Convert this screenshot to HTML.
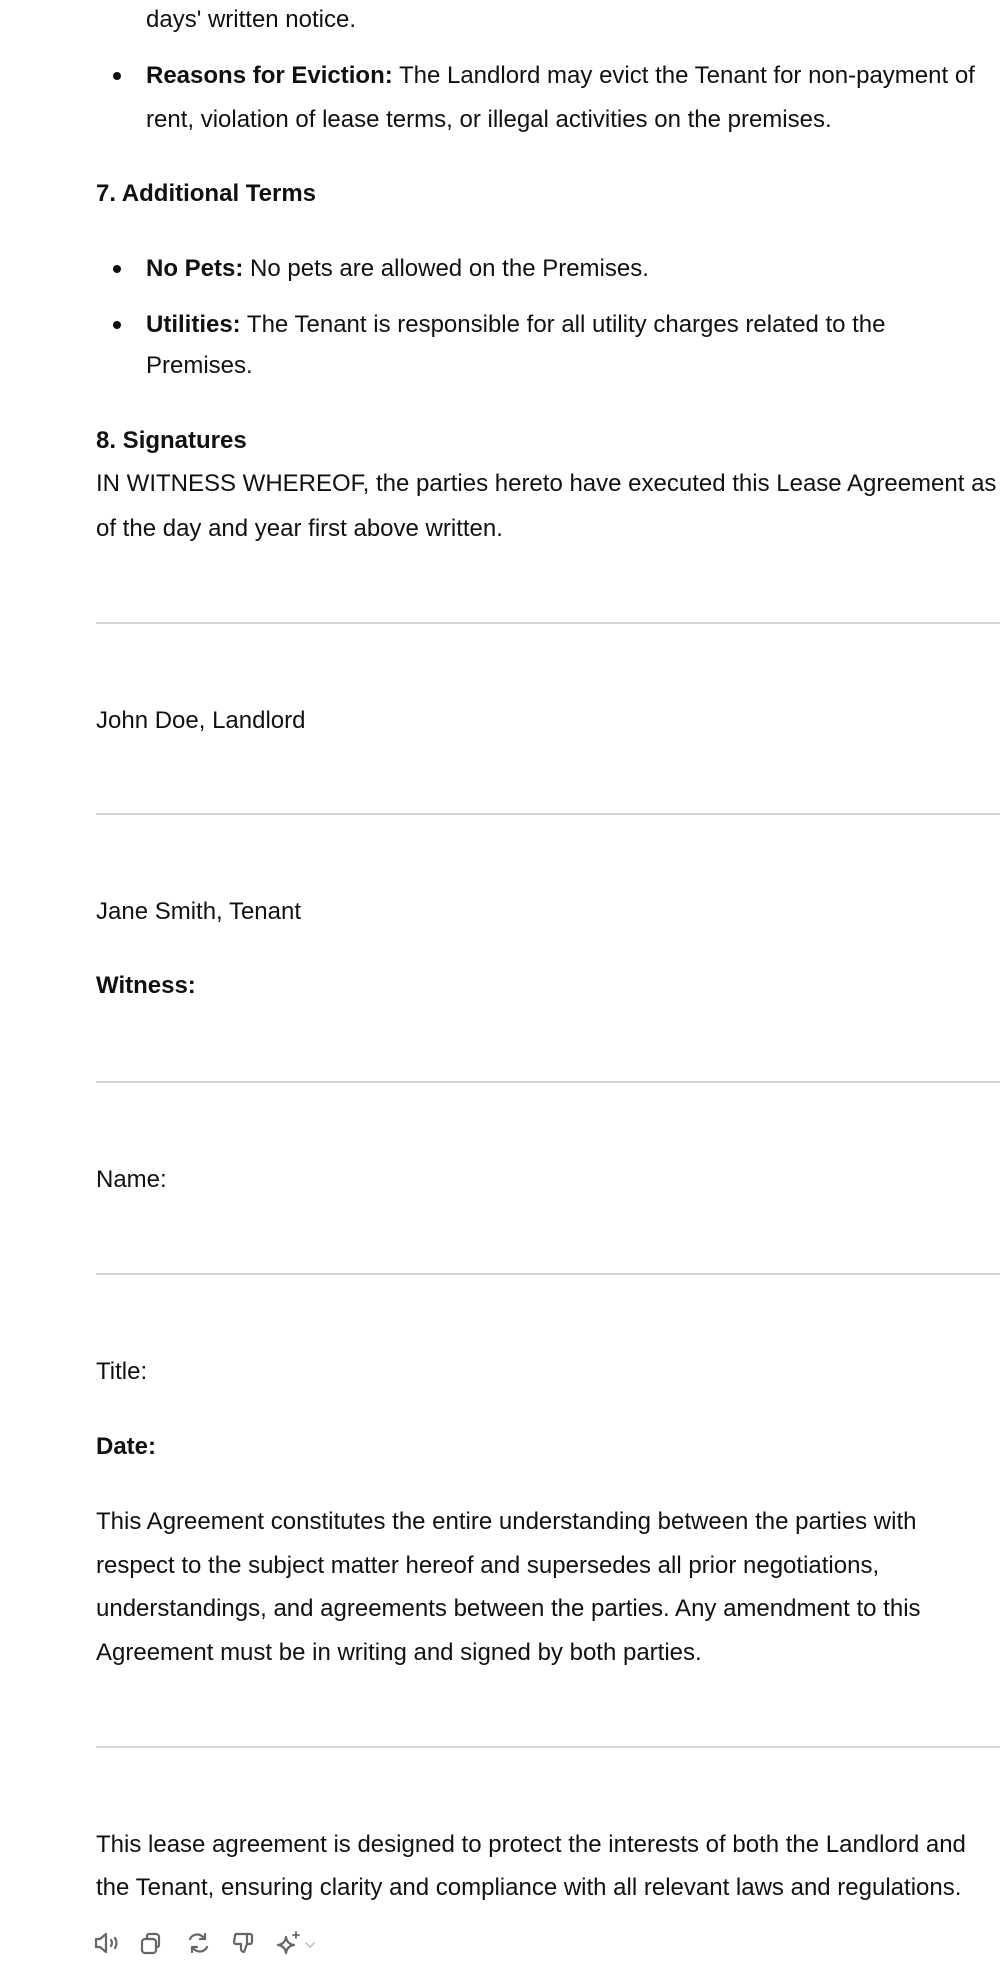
<!DOCTYPE html>
<html><head><meta charset="utf-8"><style>
html,body{margin:0;padding:0;background:#fff;}
body{width:1000px;height:1988px;position:relative;overflow:hidden;font-family:"Liberation Sans",sans-serif;font-size:24px;color:#111;letter-spacing:0;}
.l{position:absolute;left:96px;white-space:nowrap;line-height:28px;height:28px;}
.b{left:146px;}
.dot{position:absolute;left:113px;width:8px;height:8px;border-radius:50%;background:#111;}
strong{font-weight:bold;}
.hr{position:absolute;left:96px;width:904px;height:0;border-top:2px solid #d6d6d6;}
svg{position:absolute;}
</style></head><body>
<div class="l b" style="top:6px">days' written notice.</div>
<div class="dot" style="top:72px"></div>
<div class="l b" style="top:62px"><strong>Reasons for Eviction:</strong> The Landlord may evict the Tenant for non-payment of</div>
<div class="l b" style="top:106px">rent, violation of lease terms, or illegal activities on the premises.</div>
<div class="l" style="top:180px"><strong>7. Additional Terms</strong></div>
<div class="dot" style="top:265px"></div>
<div class="l b" style="top:255px"><strong>No Pets:</strong> No pets are allowed on the Premises.</div>
<div class="dot" style="top:321px"></div>
<div class="l b" style="top:311px"><strong>Utilities:</strong> The Tenant is responsible for all utility charges related to the</div>
<div class="l b" style="top:352px">Premises.</div>
<div class="l" style="top:427px"><strong>8. Signatures</strong></div>
<div class="l" style="top:470px">IN WITNESS WHEREOF, the parties hereto have executed this Lease Agreement as</div>
<div class="l" style="top:515px">of the day and year first above written.</div>
<div class="hr" style="top:622px"></div>
<div class="l" style="top:707px">John Doe, Landlord</div>
<div class="hr" style="top:813px"></div>
<div class="l" style="top:898px">Jane Smith, Tenant</div>
<div class="l" style="top:972px"><strong>Witness:</strong></div>
<div class="hr" style="top:1081px"></div>
<div class="l" style="top:1166px">Name:</div>
<div class="hr" style="top:1273px"></div>
<div class="l" style="top:1358px">Title:</div>
<div class="l" style="top:1433px"><strong>Date:</strong></div>
<div class="l" style="top:1508px">This Agreement constitutes the entire understanding between the parties with</div>
<div class="l" style="top:1552px">respect to the subject matter hereof and supersedes all prior negotiations,</div>
<div class="l" style="top:1595px">understandings, and agreements between the parties. Any amendment to this</div>
<div class="l" style="top:1639px">Agreement must be in writing and signed by both parties.</div>
<div class="hr" style="top:1746px"></div>
<div class="l" style="top:1831px">This lease agreement is designed to protect the interests of both the Landlord and</div>
<div class="l" style="top:1874px">the Tenant, ensuring clarity and compliance with all relevant laws and regulations.</div>
<svg style="left:94px;top:1930px" width="240" height="26" viewBox="0 0 240 26" fill="none" stroke="#666" stroke-width="2.2" stroke-linecap="round" stroke-linejoin="round">
<path d="M2 9h4l6-5v18l-6-5H2z"/>
<path d="M17 10q2 3 0 6"/><path d="M21 8q3 5 0 10"/>
<rect x="48" y="9" width="14" height="14" rx="3"/><path d="M53 9V6a2 2 0 0 1 2-2h7a3 3 0 0 1 3 3v8a2 2 0 0 1-2 2h-1"/>
<path d="M96 9a8 8 0 0 1 13-2l2 2M111 4v5h-5"/><path d="M113 17a8 8 0 0 1-13 2l-2-2M98 22v-5h5"/>
<path d="M142 4h14a2 2 0 0 1 2 2v6a2 2 0 0 1-2 2h-3l-3 8a3 3 0 0 1-3-3v-5h-5a2 2 0 0 1-2-2l1-6a2 2 0 0 1 1-2z"/><path d="M153 4v10"/>
<path d="M192 7q1 7 8 8q-7 1-8 8q-1-7-8-8q7-1 8-8z"/><path d="M202 2v6M199 5h6" stroke-width="1.8"/>
<path d="M212 13l4 4 4-4" stroke="#bbb" stroke-width="1.5"/>
</svg>
</body></html>
